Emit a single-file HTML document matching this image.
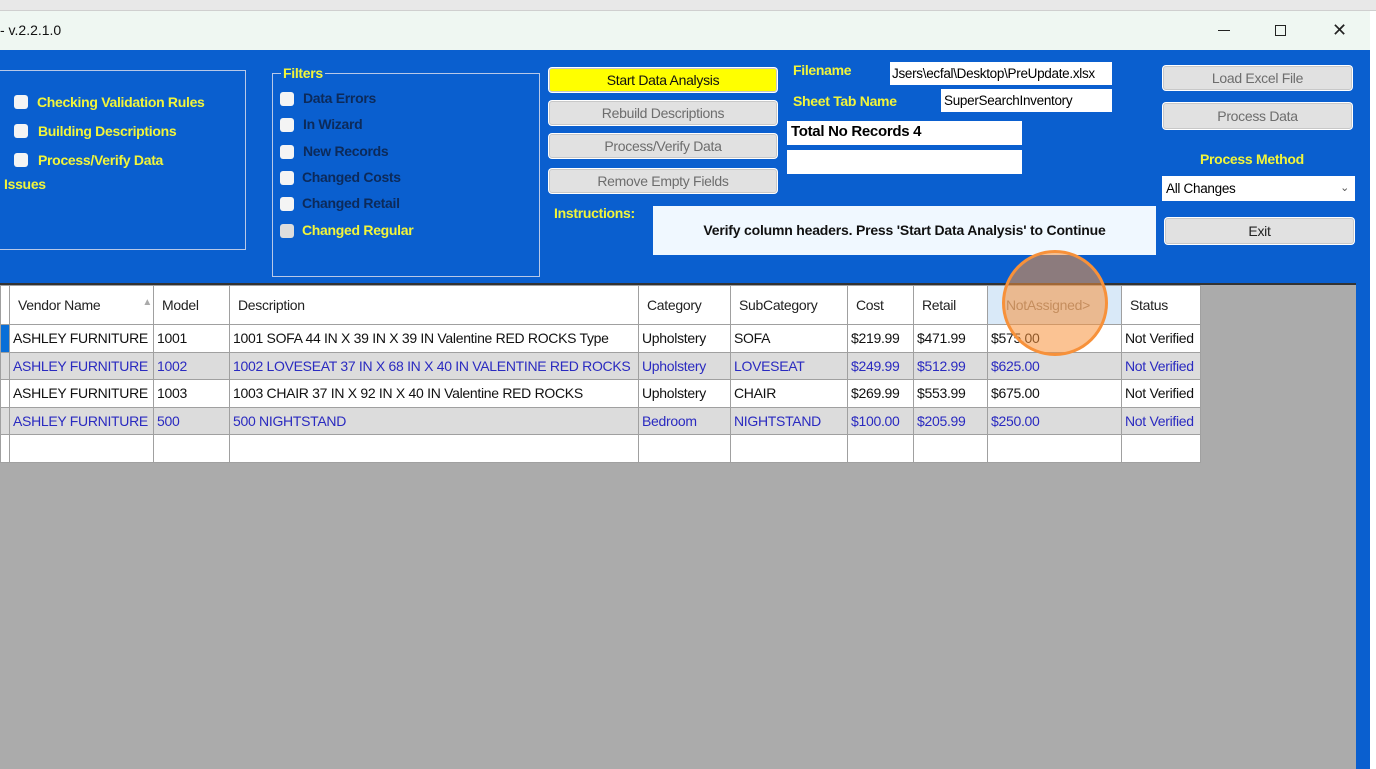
<!DOCTYPE html>
<html><head><meta charset="utf-8"><style>
*{margin:0;padding:0;box-sizing:border-box}
body{width:1376px;height:769px;overflow:hidden;background:#fff;font-family:"Liberation Sans",sans-serif;position:relative}
.a{position:absolute}
.y{color:#f2f53a;font-weight:bold;font-size:14px;letter-spacing:-0.3px}
.d{color:#0c2a5a;font-weight:bold;font-size:14px;letter-spacing:-0.3px}
.cb{position:absolute;width:14px;height:14px;background:#f4f4f4;border-radius:3px}
.btn{position:absolute;background:#e1e1e1;border:1px solid #c8c8c8;border-radius:3px;box-shadow:0 0 0 1px #fff;font-size:14px;color:#6d6d6d;text-align:center;letter-spacing:-0.3px}
.tb{position:absolute;background:#fff;font-size:13.5px;color:#000;letter-spacing:-0.3px}
table{border-collapse:collapse;font-size:14px;letter-spacing:-0.3px;table-layout:fixed;width:1200px}
td{border:1px solid #a0a0a0;height:27.5px;padding:0 3px;white-space:nowrap;overflow:hidden}
tr.h td{height:39px;background:#fff;color:#222;padding-left:8px}
tr.w td{background:#fff;color:#111}
tr.g td{background:#dcdcdc;color:#2a2ac0}
</style></head><body>
<div class="a" style="left:0;top:0;width:1376px;height:11px;background:#e8e8e8;border-bottom:1px solid #cfcfcf"></div>
<div class="a" style="left:0;top:11px;width:1370px;height:39px;background:#eff7f2"></div>
<div class="a" style="left:0;top:22px;font-size:14px;color:#111">- v.2.2.1.0</div>
<div class="a" style="left:1218px;top:30px;width:12px;height:1px;background:#222"></div>
<div class="a" style="left:1275px;top:25px;width:11px;height:11px;border:1px solid #222"></div>
<div class="a" style="left:1332px;top:20px;font-size:18px;color:#222">✕</div>
<div class="a" style="left:0;top:50px;width:1370px;height:719px;background:#0a5fcf"></div>
<div class="a" style="left:0;top:283px;width:1356px;height:486px;background:#ababab;border-top:2px solid #333"></div>
<div class="a" style="left:1370px;top:11px;width:6px;height:758px;background:#fff"></div>

<div class="a" style="left:-2px;top:70px;width:248px;height:180px;border:1.5px solid #b8c8e8"></div>
<div class="cb" style="left:14px;top:95px"></div><div class="a y" style="left:37px;top:94px">Checking Validation Rules</div>
<div class="cb" style="left:14px;top:124px"></div><div class="a y" style="left:38px;top:123px">Building Descriptions</div>
<div class="cb" style="left:14px;top:153px"></div><div class="a y" style="left:38px;top:152px">Process/Verify Data</div>
<div class="a y" style="left:4px;top:176px">Issues</div>

<div class="a" style="left:272px;top:73px;width:268px;height:204px;border:1.5px solid #b8c8e8"></div>
<div class="a y" style="left:281px;top:65px;background:#0a5fcf;padding:0 2px">Filters</div>
<div class="cb" style="left:280px;top:92px"></div><div class="a d" style="left:303px;top:90px">Data Errors</div>
<div class="cb" style="left:280px;top:118px"></div><div class="a d" style="left:303px;top:116px">In Wizard</div>
<div class="cb" style="left:280px;top:145px"></div><div class="a d" style="left:303px;top:143px">New Records</div>
<div class="cb" style="left:280px;top:171px"></div><div class="a d" style="left:302px;top:169px">Changed Costs</div>
<div class="cb" style="left:280px;top:197px"></div><div class="a d" style="left:302px;top:195px">Changed Retail</div>
<div class="cb" style="left:280px;top:224px;background:#ddd"></div><div class="a y" style="left:302px;top:222px">Changed Regular</div>

<div class="btn" style="left:549px;top:68px;width:228px;height:24px;line-height:22px;background:#ffff00;color:#111">Start Data Analysis</div>
<div class="btn" style="left:549px;top:101px;width:228px;height:24px;line-height:22px">Rebuild Descriptions</div>
<div class="btn" style="left:549px;top:134px;width:228px;height:24px;line-height:22px">Process/Verify Data</div>
<div class="btn" style="left:549px;top:169px;width:228px;height:24px;line-height:22px">Remove Empty Fields</div>
<div class="a y" style="left:554px;top:205px">Instructions:</div>
<div class="a" style="left:653px;top:206px;width:503px;height:49px;background:#f0f8ff;font-size:14px;font-weight:bold;color:#111;text-align:center;line-height:49px;letter-spacing:-0.2px">Verify column headers. Press 'Start Data Analysis' to Continue</div>

<div class="a y" style="left:793px;top:62px">Filename</div>
<div class="tb" style="left:890px;top:62px;width:222px;height:23px;line-height:23px;padding-left:2px">Jsers\ecfal\Desktop\PreUpdate.xlsx</div>
<div class="a y" style="left:793px;top:93px">Sheet Tab Name</div>
<div class="tb" style="left:941px;top:89px;width:171px;height:23px;line-height:23px;padding-left:3px">SuperSearchInventory</div>
<div class="tb" style="left:787px;top:121px;width:235px;height:24px;line-height:22px;padding-left:4px;font-weight:bold;font-size:15px">Total No Records 4</div>
<div class="tb" style="left:787px;top:150px;width:235px;height:24px"></div>

<div class="btn" style="left:1163px;top:66px;width:189px;height:24px;line-height:22px">Load Excel File</div>
<div class="btn" style="left:1163px;top:103px;width:189px;height:26px;line-height:24px">Process Data</div>
<div class="a y" style="left:1200px;top:151px">Process Method</div>
<div class="tb" style="left:1162px;top:176px;width:193px;height:25px;line-height:25px;padding-left:4px">All Changes<span style="position:absolute;right:6px;color:#555;font-size:11px">&#8964;</span></div>
<div class="btn" style="left:1165px;top:218px;width:189px;height:26px;line-height:24px;color:#222">Exit</div>

<table class="a" style="left:0;top:285px">
<colgroup><col style="width:9px"><col style="width:144px"><col style="width:76px"><col style="width:409px"><col style="width:92px"><col style="width:117px"><col style="width:66px"><col style="width:74px"><col style="width:134px"><col style="width:79px"></colgroup>
<tr class="h"><td></td><td>Vendor Name<span style="float:right;color:#aaa;font-size:10px;margin-right:-2px">▲</span></td><td style="padding-left:8px">Model</td><td>Description</td><td>Category</td><td>SubCategory</td><td>Cost</td><td>Retail</td><td style="background:#d9e9f8;color:#888;padding-left:18px">NotAssigned&gt;</td><td>Status</td></tr>
<tr class="w"><td style="background:#0a6fd8"></td><td>ASHLEY FURNITURE</td><td>1001</td><td>1001 SOFA 44 IN X 39 IN X 39 IN Valentine RED ROCKS Type</td><td>Upholstery</td><td>SOFA</td><td>$219.99</td><td>$471.99</td><td>$575.00</td><td>Not Verified</td></tr>
<tr class="g"><td></td><td>ASHLEY FURNITURE</td><td>1002</td><td>1002 LOVESEAT 37 IN X 68 IN X 40 IN VALENTINE RED ROCKS</td><td>Upholstery</td><td>LOVESEAT</td><td>$249.99</td><td>$512.99</td><td>$625.00</td><td>Not Verified</td></tr>
<tr class="w"><td></td><td>ASHLEY FURNITURE</td><td>1003</td><td>1003 CHAIR 37 IN X 92 IN X 40 IN Valentine RED ROCKS</td><td>Upholstery</td><td>CHAIR</td><td>$269.99</td><td>$553.99</td><td>$675.00</td><td>Not Verified</td></tr>
<tr class="g"><td></td><td>ASHLEY FURNITURE</td><td>500</td><td>500 NIGHTSTAND</td><td>Bedroom</td><td>NIGHTSTAND</td><td>$100.00</td><td>$205.99</td><td>$250.00</td><td>Not Verified</td></tr>
<tr class="w"><td></td><td></td><td></td><td></td><td></td><td></td><td></td><td></td><td></td><td></td></tr>
</table>
<div class="a" style="left:1002px;top:250px;width:106px;height:106px;border-radius:50%;border:3px solid #f7913a;background:rgba(247,145,58,0.55)"></div>
</body></html>
